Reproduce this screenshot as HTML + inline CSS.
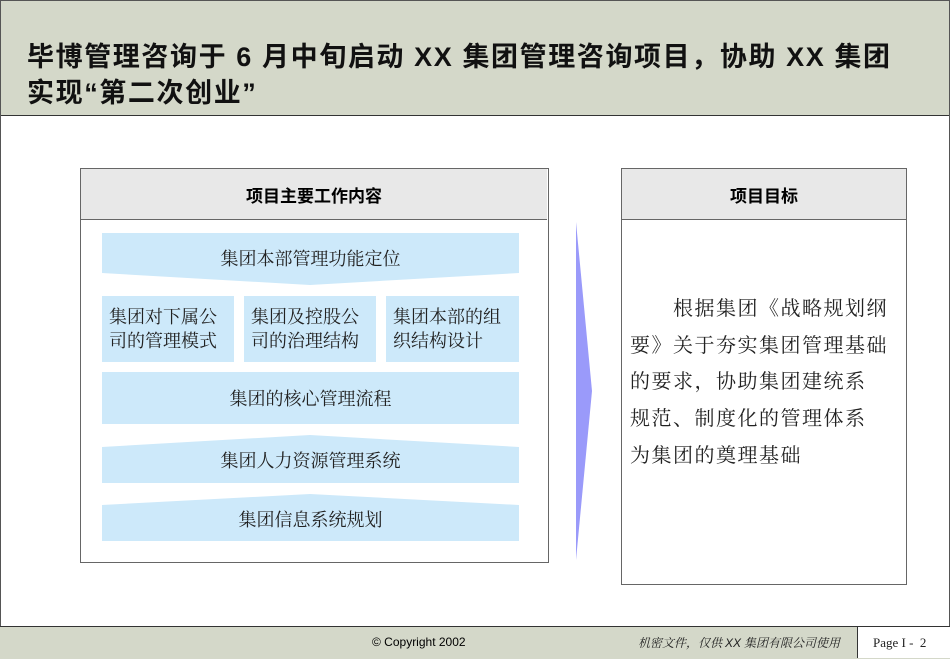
<!DOCTYPE html><html><head><meta charset="utf-8"><style>
body{margin:0;width:950px;height:658px;position:relative;background:#fff;font-family:"Liberation Sans","Noto Sans CJK SC",sans-serif;overflow:hidden}
.a{position:absolute}
.t{font-family:"Liberation Serif","Noto Serif CJK SC","Noto Sans CJK SC",serif;color:#222}
.b{background:#cde9fa;display:flex;align-items:center;justify-content:center;font-size:18px}
</style></head><body>
<div class="a" style="left:0;top:0;width:948px;height:114px;background:#d4d8c9;border:1px solid #555;border-bottom:1px solid #333"></div>
<div class="a" style="left:27px;top:39px;font-size:27px;font-weight:bold;line-height:36px;color:#111;letter-spacing:1.6px;white-space:nowrap">毕博管理咨询于 6 月中旬启动 XX 集团管理咨询项目，协助 XX 集团<br>实现“第二次创业”</div>
<div class="a" style="left:0;top:115px;width:1px;height:511px;background:#555"></div>
<div class="a" style="left:949px;top:115px;width:1px;height:511px;background:#555"></div>

<div class="a" style="left:80px;top:168px;width:467px;height:393px;border:1px solid #666"></div>
<div class="a" style="left:81px;top:169px;width:466px;height:50px;background:#e8e8e8;border-bottom:1px solid #666;display:flex;align-items:center;justify-content:center;font-size:17px;font-weight:bold">项目主要工作内容</div>

<svg class="a" style="left:0;top:0" width="950" height="658">
<polygon points="102,233 519,233 519,273 310,285 102,273" fill="#cde9fa"/>
<polygon points="102,447 310,435 519,447 519,483 102,483" fill="#cde9fa"/>
<polygon points="102,505 310,494 519,505 519,541 102,541" fill="#cde9fa"/>
<polygon points="576,222 592,391 576,560" fill="#9a9afa"/>
</svg>
<div class="a t" style="left:102px;top:245px;width:417px;text-align:center;font-size:18px">集团本部管理功能定位</div>
<div class="a b t" style="left:102px;top:296px;width:132px;height:66px;justify-content:flex-start;padding-left:7px;box-sizing:border-box;line-height:24px;white-space:nowrap">集团对下属公<br>司的管理模式</div>
<div class="a b t" style="left:244px;top:296px;width:132px;height:66px;justify-content:flex-start;padding-left:7px;box-sizing:border-box;line-height:24px;white-space:nowrap">集团及控股公<br>司的治理结构</div>
<div class="a b t" style="left:386px;top:296px;width:133px;height:66px;justify-content:flex-start;padding-left:7px;box-sizing:border-box;line-height:24px;white-space:nowrap">集团本部的组<br>织结构设计</div>
<div class="a b t" style="left:102px;top:372px;width:417px;height:52px">集团的核心管理流程</div>
<div class="a t" style="left:102px;top:447px;width:417px;text-align:center;font-size:18px">集团人力资源管理系统</div>
<div class="a t" style="left:102px;top:506px;width:417px;text-align:center;font-size:18px">集团信息系统规划</div>

<div class="a" style="left:621px;top:168px;width:284px;height:415px;border:1px solid #666"></div>
<div class="a" style="left:622px;top:169px;width:284px;height:50px;background:#e8e8e8;border-bottom:1px solid #666;display:flex;align-items:center;justify-content:center;font-size:17px;font-weight:bold">项目目标</div>
<div class="a t" style="left:630px;top:291px;font-size:20px;line-height:36.7px;white-space:nowrap;letter-spacing:1.5px">　　根据集团《战略规划纲<br>要》关于夯实集团管理基础<br>的要求，协助集团建统系<br>规范、制度化的管理体系<br>为集团的奠理基础</div>

<div class="a" style="left:0;top:626px;width:950px;height:32px;background:#d4d8c9;border-top:1px solid #333"></div>
<div class="a" style="left:857px;top:627px;width:92px;height:31px;background:#fff;border-left:1px solid #333"></div>
<div class="a" style="left:372px;top:635px;font-size:12px">© Copyright 2002</div>
<div class="a t" style="left:638px;top:634px;font-size:12px;font-style:italic;white-space:nowrap">机密文件，仅供 <span style="font-family:'Liberation Sans'">XX</span> 集团有限公司使用</div>
<div class="a t" style="left:873px;top:635px;font-size:13px">Page I - &nbsp;2</div>
</body></html>
